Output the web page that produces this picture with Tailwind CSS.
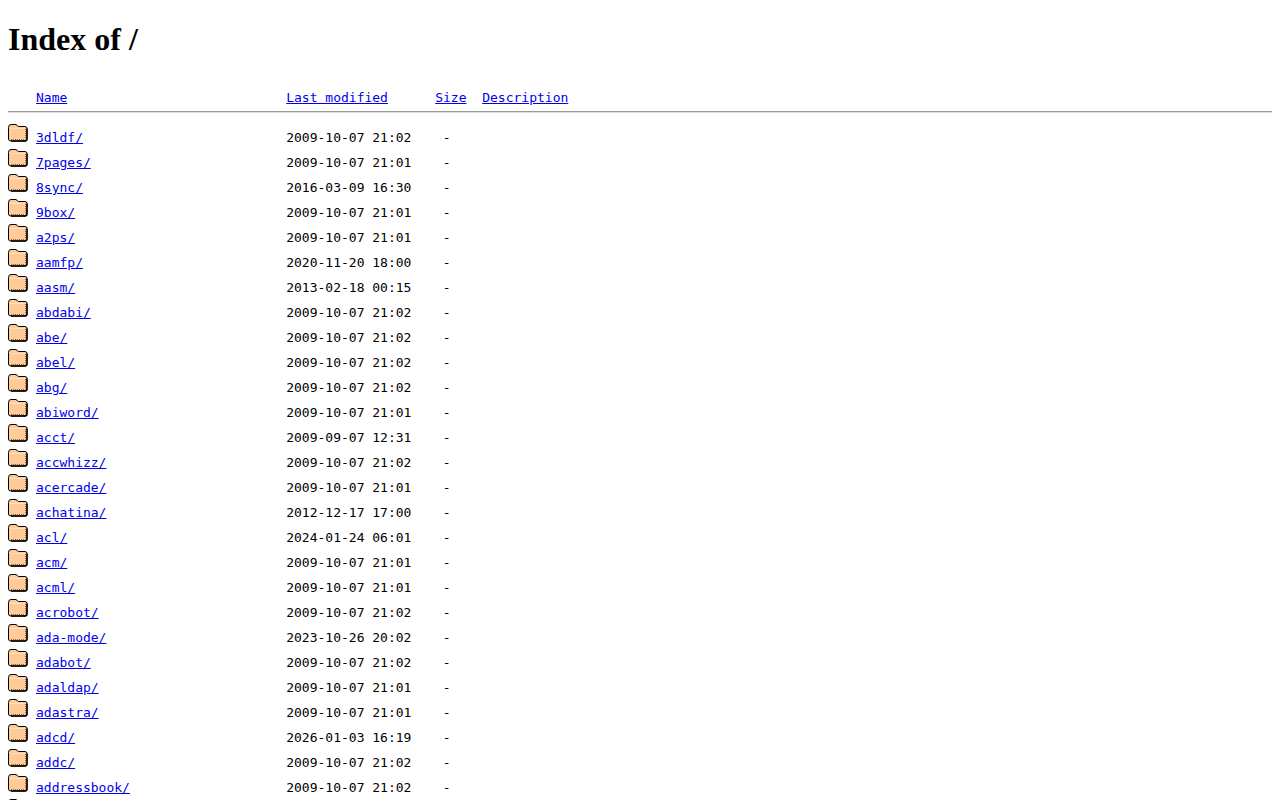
<!DOCTYPE html>
<html><head><meta charset="utf-8"><script src="https://cdn.jsdelivr.net/npm/@tailwindcss/browser@4"></script></head>
<body class="bg-white text-black h-[800px] overflow-hidden">
<svg class="hidden"><defs><symbol id="f" viewBox="0 0 20 22"><path d="M.5 3.5Q.5 .5 3 .5H8L10.5 2.5H17Q19 2.5 19 4.5V15Q19 17 17 17H3Q.5 17 .5 15Z" fill="#FFCC99" stroke="#000"/><path d="M2 4.5H17" stroke="#FFE0BF"/><path d="M19 4.5V15Q19 17 17 17H3" fill="none" stroke="#000" stroke-width="1.4"/><path d="M17.5 5V15.5M3 15.5H17" stroke="#996633" stroke-dasharray="1 1"/></symbol></defs></svg>
<h1 class="font-['Liberation_Serif',serif] font-bold text-[32px] leading-[37px] mx-2 mt-[21px] mb-[32px]">Index of /</h1>
<div class="mx-2 font-['DejaVu_Sans_Mono',monospace] text-[13px] leading-[15px]">
<div class="flex h-[15px] pl-[28px]"><a class="w-[250.2px] text-[#0000ee] underline" href="#">Name</a><a class="w-[149px] text-[#0000ee] underline" href="#">Last modified</a><a class="w-[47px] text-[#0000ee] underline" href="#">Size</a><a class="text-[#0000ee] underline" href="#">Description</a></div>
<hr class="border-0 border-t border-t-[#999] border-b border-b-[#ddd] mt-[6px] mb-[11px] h-0">
<div class="flex h-[25px]"><svg class="w-5 h-[22px] mr-2 shrink-0"><use href="#f"/></svg><a class="w-[250.2px] pt-[6px] h-[21px] text-[#0000ee] underline" href="#">3dldf/</a><span class="pt-[6px] whitespace-pre">2009-10-07 21:02    -</span></div>
<div class="flex h-[25px]"><svg class="w-5 h-[22px] mr-2 shrink-0"><use href="#f"/></svg><a class="w-[250.2px] pt-[6px] h-[21px] text-[#0000ee] underline" href="#">7pages/</a><span class="pt-[6px] whitespace-pre">2009-10-07 21:01    -</span></div>
<div class="flex h-[25px]"><svg class="w-5 h-[22px] mr-2 shrink-0"><use href="#f"/></svg><a class="w-[250.2px] pt-[6px] h-[21px] text-[#0000ee] underline" href="#">8sync/</a><span class="pt-[6px] whitespace-pre">2016-03-09 16:30    -</span></div>
<div class="flex h-[25px]"><svg class="w-5 h-[22px] mr-2 shrink-0"><use href="#f"/></svg><a class="w-[250.2px] pt-[6px] h-[21px] text-[#0000ee] underline" href="#">9box/</a><span class="pt-[6px] whitespace-pre">2009-10-07 21:01    -</span></div>
<div class="flex h-[25px]"><svg class="w-5 h-[22px] mr-2 shrink-0"><use href="#f"/></svg><a class="w-[250.2px] pt-[6px] h-[21px] text-[#0000ee] underline" href="#">a2ps/</a><span class="pt-[6px] whitespace-pre">2009-10-07 21:01    -</span></div>
<div class="flex h-[25px]"><svg class="w-5 h-[22px] mr-2 shrink-0"><use href="#f"/></svg><a class="w-[250.2px] pt-[6px] h-[21px] text-[#0000ee] underline" href="#">aamfp/</a><span class="pt-[6px] whitespace-pre">2020-11-20 18:00    -</span></div>
<div class="flex h-[25px]"><svg class="w-5 h-[22px] mr-2 shrink-0"><use href="#f"/></svg><a class="w-[250.2px] pt-[6px] h-[21px] text-[#0000ee] underline" href="#">aasm/</a><span class="pt-[6px] whitespace-pre">2013-02-18 00:15    -</span></div>
<div class="flex h-[25px]"><svg class="w-5 h-[22px] mr-2 shrink-0"><use href="#f"/></svg><a class="w-[250.2px] pt-[6px] h-[21px] text-[#0000ee] underline" href="#">abdabi/</a><span class="pt-[6px] whitespace-pre">2009-10-07 21:02    -</span></div>
<div class="flex h-[25px]"><svg class="w-5 h-[22px] mr-2 shrink-0"><use href="#f"/></svg><a class="w-[250.2px] pt-[6px] h-[21px] text-[#0000ee] underline" href="#">abe/</a><span class="pt-[6px] whitespace-pre">2009-10-07 21:02    -</span></div>
<div class="flex h-[25px]"><svg class="w-5 h-[22px] mr-2 shrink-0"><use href="#f"/></svg><a class="w-[250.2px] pt-[6px] h-[21px] text-[#0000ee] underline" href="#">abel/</a><span class="pt-[6px] whitespace-pre">2009-10-07 21:02    -</span></div>
<div class="flex h-[25px]"><svg class="w-5 h-[22px] mr-2 shrink-0"><use href="#f"/></svg><a class="w-[250.2px] pt-[6px] h-[21px] text-[#0000ee] underline" href="#">abg/</a><span class="pt-[6px] whitespace-pre">2009-10-07 21:02    -</span></div>
<div class="flex h-[25px]"><svg class="w-5 h-[22px] mr-2 shrink-0"><use href="#f"/></svg><a class="w-[250.2px] pt-[6px] h-[21px] text-[#0000ee] underline" href="#">abiword/</a><span class="pt-[6px] whitespace-pre">2009-10-07 21:01    -</span></div>
<div class="flex h-[25px]"><svg class="w-5 h-[22px] mr-2 shrink-0"><use href="#f"/></svg><a class="w-[250.2px] pt-[6px] h-[21px] text-[#0000ee] underline" href="#">acct/</a><span class="pt-[6px] whitespace-pre">2009-09-07 12:31    -</span></div>
<div class="flex h-[25px]"><svg class="w-5 h-[22px] mr-2 shrink-0"><use href="#f"/></svg><a class="w-[250.2px] pt-[6px] h-[21px] text-[#0000ee] underline" href="#">accwhizz/</a><span class="pt-[6px] whitespace-pre">2009-10-07 21:02    -</span></div>
<div class="flex h-[25px]"><svg class="w-5 h-[22px] mr-2 shrink-0"><use href="#f"/></svg><a class="w-[250.2px] pt-[6px] h-[21px] text-[#0000ee] underline" href="#">acercade/</a><span class="pt-[6px] whitespace-pre">2009-10-07 21:01    -</span></div>
<div class="flex h-[25px]"><svg class="w-5 h-[22px] mr-2 shrink-0"><use href="#f"/></svg><a class="w-[250.2px] pt-[6px] h-[21px] text-[#0000ee] underline" href="#">achatina/</a><span class="pt-[6px] whitespace-pre">2012-12-17 17:00    -</span></div>
<div class="flex h-[25px]"><svg class="w-5 h-[22px] mr-2 shrink-0"><use href="#f"/></svg><a class="w-[250.2px] pt-[6px] h-[21px] text-[#0000ee] underline" href="#">acl/</a><span class="pt-[6px] whitespace-pre">2024-01-24 06:01    -</span></div>
<div class="flex h-[25px]"><svg class="w-5 h-[22px] mr-2 shrink-0"><use href="#f"/></svg><a class="w-[250.2px] pt-[6px] h-[21px] text-[#0000ee] underline" href="#">acm/</a><span class="pt-[6px] whitespace-pre">2009-10-07 21:01    -</span></div>
<div class="flex h-[25px]"><svg class="w-5 h-[22px] mr-2 shrink-0"><use href="#f"/></svg><a class="w-[250.2px] pt-[6px] h-[21px] text-[#0000ee] underline" href="#">acml/</a><span class="pt-[6px] whitespace-pre">2009-10-07 21:01    -</span></div>
<div class="flex h-[25px]"><svg class="w-5 h-[22px] mr-2 shrink-0"><use href="#f"/></svg><a class="w-[250.2px] pt-[6px] h-[21px] text-[#0000ee] underline" href="#">acrobot/</a><span class="pt-[6px] whitespace-pre">2009-10-07 21:02    -</span></div>
<div class="flex h-[25px]"><svg class="w-5 h-[22px] mr-2 shrink-0"><use href="#f"/></svg><a class="w-[250.2px] pt-[6px] h-[21px] text-[#0000ee] underline" href="#">ada-mode/</a><span class="pt-[6px] whitespace-pre">2023-10-26 20:02    -</span></div>
<div class="flex h-[25px]"><svg class="w-5 h-[22px] mr-2 shrink-0"><use href="#f"/></svg><a class="w-[250.2px] pt-[6px] h-[21px] text-[#0000ee] underline" href="#">adabot/</a><span class="pt-[6px] whitespace-pre">2009-10-07 21:02    -</span></div>
<div class="flex h-[25px]"><svg class="w-5 h-[22px] mr-2 shrink-0"><use href="#f"/></svg><a class="w-[250.2px] pt-[6px] h-[21px] text-[#0000ee] underline" href="#">adaldap/</a><span class="pt-[6px] whitespace-pre">2009-10-07 21:01    -</span></div>
<div class="flex h-[25px]"><svg class="w-5 h-[22px] mr-2 shrink-0"><use href="#f"/></svg><a class="w-[250.2px] pt-[6px] h-[21px] text-[#0000ee] underline" href="#">adastra/</a><span class="pt-[6px] whitespace-pre">2009-10-07 21:01    -</span></div>
<div class="flex h-[25px]"><svg class="w-5 h-[22px] mr-2 shrink-0"><use href="#f"/></svg><a class="w-[250.2px] pt-[6px] h-[21px] text-[#0000ee] underline" href="#">adcd/</a><span class="pt-[6px] whitespace-pre">2026-01-03 16:19    -</span></div>
<div class="flex h-[25px]"><svg class="w-5 h-[22px] mr-2 shrink-0"><use href="#f"/></svg><a class="w-[250.2px] pt-[6px] h-[21px] text-[#0000ee] underline" href="#">addc/</a><span class="pt-[6px] whitespace-pre">2009-10-07 21:02    -</span></div>
<div class="flex h-[25px]"><svg class="w-5 h-[22px] mr-2 shrink-0"><use href="#f"/></svg><a class="w-[250.2px] pt-[6px] h-[21px] text-[#0000ee] underline" href="#">addressbook/</a><span class="pt-[6px] whitespace-pre">2009-10-07 21:02    -</span></div>
<div class="flex h-[25px]"><svg class="w-5 h-[22px] mr-2 shrink-0"><use href="#f"/></svg></div>
</div>
</body></html>
